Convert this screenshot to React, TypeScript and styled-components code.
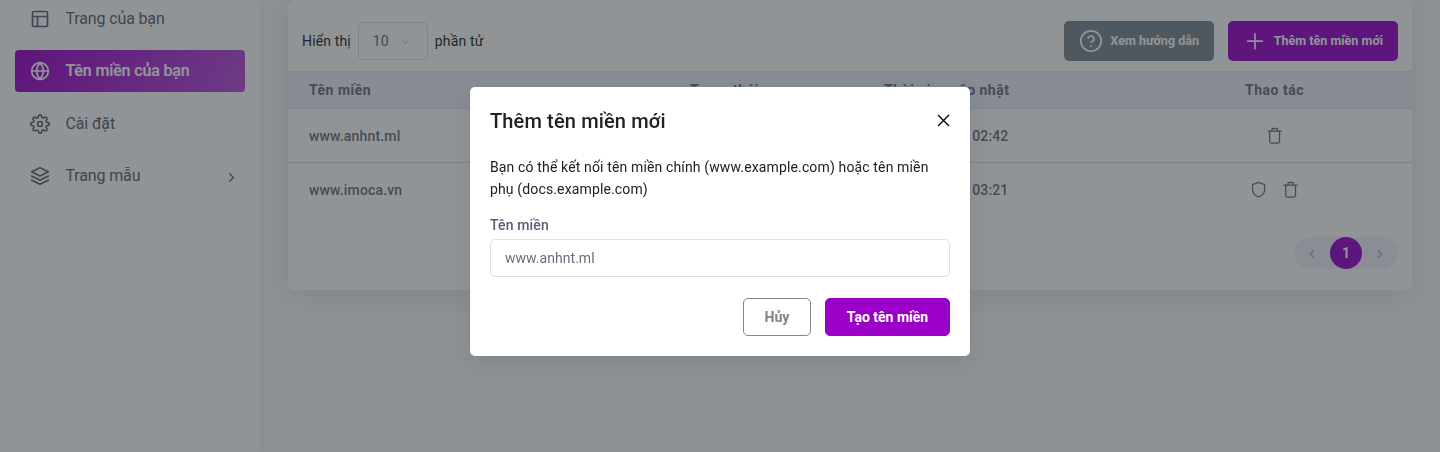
import React from "react";
import styled, { createGlobalStyle, css } from "styled-components";

const GlobalStyle = createGlobalStyle`
  *, *::before, *::after { box-sizing: border-box; }
  html, body { margin: 0; height: 100%; overflow: hidden; }
  body {
    background: #f8f8f8;
    color: #212121;
    font-family: Roboto, "Liberation Sans", sans-serif;
    font-size: 14px;
    line-height: 1.45;
    letter-spacing: 0.14px;
  }
  button, input { font: inherit; letter-spacing: inherit; }
  svg { display: block; flex: none; }
`;

const purple = "#9b00c8";

const Page = styled.div`
  display: flex;
  height: 452px;
  overflow: hidden;
`;

const Sidebar = styled.nav`
  display: flex;
  flex-direction: column;
  gap: 10.5px;
  width: 260px;
  flex: none;
  padding: 0 15px;
  background: #fff;
  box-shadow: 0 0 15px rgba(34, 41, 47, 0.05);
`;

const NavItem = styled.a<{ $active?: boolean; $first?: boolean }>`
  display: flex;
  align-items: center;
  height: 42px;
  margin-top: ${(p) => (p.$first ? "-2.5px" : "0")};
  padding: 0 8px 0 15px;
  border-radius: 4px;
  color: #625f6e;
  font-size: 16px;
  letter-spacing: -0.14px;
  text-decoration: none;
  svg { margin-right: 15.5px; }
  svg + span { flex: 1; padding-top: ${(p) => (p.$active ? 0 : 1)}px; }
  &:last-child svg + span { padding-top: 0; }
  span + svg { margin: 3px -2px 0 0; }
  ${(p) =>
    p.$active &&
    css`
      color: #fff;
      font-weight: 500;
      background: linear-gradient(118deg, ${purple}, rgba(155, 0, 200, 0.7));
      -webkit-text-stroke: 0.2px #fff;
    `}
`;

const Main = styled.main`
  flex: 1;
  padding: 0 28px;
`;

const Card = styled.section`
  height: 290px;
  border-radius: 6px;
  background: #fff;
  box-shadow: 0 4px 24px rgba(34, 41, 47, 0.1);
`;

const Toolbar = styled.div`
  display: flex;
  align-items: center;
  justify-content: space-between;
  height: 71px;
  padding: 11px 14px 0;
`;

const Group = styled.div<{ $gap: number }>`
  display: flex;
  align-items: center;
  gap: ${(p) => p.$gap}px;
`;

const PageSize = styled.div`
  display: flex;
  align-items: center;
  justify-content: space-between;
  width: 70px;
  height: 38px;
  padding: 0 14px;
  border: 1px solid #dcdae6;
  border-radius: 5px;
  color: #6e6b7b;
  svg { color: #d8d6e2; }
`;

const ToolButton = styled.button<{ $color: string; $width: number }>`
  display: flex;
  align-items: center;
  justify-content: space-between;
  width: ${(p) => p.$width}px;
  height: 40px;
  padding: 0 15px;
  border: 0;
  border-radius: 5px;
  background: ${(p) => p.$color};
  color: #fff;
  font-size: 12.55px;
  font-weight: 700;
  letter-spacing: 0;
  white-space: nowrap;
`;

const Row = styled.div<{ $head?: boolean }>`
  display: grid;
  grid-template-columns: 381px 194px 274px 275px;
  align-items: center;
  height: ${(p) => (p.$head ? 38 : 54)}px;
  color: #6e6b7b;
  font-weight: ${(p) => (p.$head ? 700 : 500)};
  letter-spacing: ${(p) => (p.$head ? 0.5 : 0.16)}px;
  border-bottom: 1px solid #d8d8d8;
  ${(p) =>
    p.$head &&
    css`
      background: #efeef8;
      border-top: 1px solid #e4e2ee;
      border-bottom-color: #e4e2ee;
    `}
  &:last-of-type { border-bottom: 0; }
`;

const Cell = styled.div`
  padding: 1px 0 0 21px;
`;

const HeadCell = styled(Cell)`
  padding-top: 0;
`;

const TimeCell = styled(Cell)`
  width: 145.5px;
  text-align: right;
`;

const Actions = styled.div`
  display: flex;
  justify-content: center;
  gap: 16px;
`;

const Footer = styled.footer`
  display: flex;
  justify-content: flex-end;
  padding: 20px 14px 0;
`;

const Pager = styled.div`
  display: flex;
  align-items: center;
  justify-content: space-between;
  width: 104px;
  height: 32px;
  border-radius: 16px;
  background: #f2f1f8;
  color: #a8a5b3;
  svg { margin: 2px 11px 0; }
`;

const PageNumber = styled.span`
  width: 32px;
  height: 32px;
  border-radius: 50%;
  background: ${purple};
  color: #fff;
  font-weight: 700;
  line-height: 32px;
  text-align: center;
`;

const Overlay = styled.div`
  position: fixed;
  inset: 0;
  padding-top: 87px;
  background: rgba(34, 41, 47, 0.5);
`;

const Dialog = styled.div`
  width: 500px;
  height: 269px;
  margin: 0 auto;
  padding: 20px;
  border-radius: 5px;
  background: #fff;
  box-shadow: 0 5px 20px rgba(34, 41, 47, 0.1);
`;

const DialogHead = styled.header`
  display: flex;
  align-items: center;
  justify-content: space-between;
  height: 29px;
  svg { margin-bottom: 2px; }
`;

const Title = styled.h2`
  margin: 0;
  font-size: 20px;
  font-weight: 500;
`;

const Description = styled.p`
  margin: 20px 0 14px;
  line-height: 22px;
`;

const Label = styled.label`
  display: block;
  height: 22px;
  margin-bottom: 3px;
  color: #5e5873;
  font-weight: 500;
  line-height: 22px;
`;

const Input = styled.input`
  display: block;
  width: 100%;
  height: 38px;
  padding: 0 14px;
  border: 1px solid #e0deed;
  border-radius: 5px;
  color: #6e6b7b;
  letter-spacing: 0.04px;
  outline: 0;
`;

const DialogActions = styled.div`
  display: flex;
  justify-content: flex-end;
  gap: 14px;
  margin-top: 21px;
`;

const DialogButton = styled.button<{ $primary?: boolean }>`
  width: ${(p) => (p.$primary ? 125 : 68)}px;
  height: 38px;
  padding: 0;
  border: 1px solid ${(p) => (p.$primary ? purple : "#82868b")};
  border-radius: 5px;
  background: ${(p) => (p.$primary ? purple : "#fff")};
  color: ${(p) => (p.$primary ? "#fff" : "#82868b")};
  font-weight: 700;
  letter-spacing: 0;
`;

type IconProps = { size: number; stroke?: number; children: React.ReactNode };

const Icon = ({ size, stroke = 2, children }: IconProps) => (
  <svg
    width={size}
    height={size}
    viewBox="0 0 24 24"
    fill="none"
    stroke="currentColor"
    strokeWidth={stroke}
    strokeLinecap="round"
    strokeLinejoin="round"
  >
    {children}
  </svg>
);

const LayoutIcon = () => (
  <Icon size={20}>
    <rect x="3" y="3" width="18" height="18" rx="2" />
    <path d="M3 9h18M9 21V9" />
  </Icon>
);

const GlobeIcon = () => (
  <Icon size={20}>
    <circle cx="12" cy="12" r="10" />
    <path d="M2 12h20" />
    <path d="M12 2a15.3 15.3 0 0 1 4 10 15.3 15.3 0 0 1-4 10 15.3 15.3 0 0 1-4-10 15.3 15.3 0 0 1 4-10z" />
  </Icon>
);

const SettingsIcon = () => (
  <Icon size={20}>
    <circle cx="12" cy="12" r="3" />
    <path d="M19.4 15a1.65 1.65 0 0 0 .33 1.82l.06.06a2 2 0 0 1 0 2.83 2 2 0 0 1-2.83 0l-.06-.06a1.65 1.65 0 0 0-1.82-.33 1.65 1.65 0 0 0-1 1.51V21a2 2 0 0 1-2 2 2 2 0 0 1-2-2v-.09A1.65 1.65 0 0 0 9 19.4a1.65 1.65 0 0 0-1.82.33l-.06.06a2 2 0 0 1-2.83 0 2 2 0 0 1 0-2.83l.06-.06a1.65 1.65 0 0 0 .33-1.82 1.65 1.65 0 0 0-1.51-1H3a2 2 0 0 1-2-2 2 2 0 0 1 2-2h.09A1.65 1.65 0 0 0 4.6 9a1.65 1.65 0 0 0-.33-1.82l-.06-.06a2 2 0 0 1 0-2.83 2 2 0 0 1 2.83 0l.06.06a1.65 1.65 0 0 0 1.82.33H9a1.65 1.65 0 0 0 1-1.51V3a2 2 0 0 1 2-2 2 2 0 0 1 2 2v.09a1.65 1.65 0 0 0 1 1.51 1.65 1.65 0 0 0 1.82-.33l.06-.06a2 2 0 0 1 2.83 0 2 2 0 0 1 0 2.83l-.06.06a1.65 1.65 0 0 0-.33 1.82V9a1.65 1.65 0 0 0 1.51 1H21a2 2 0 0 1 2 2 2 2 0 0 1-2 2h-.09a1.65 1.65 0 0 0-1.51 1z" />
  </Icon>
);

const LayersIcon = () => (
  <Icon size={20}>
    <path d="M12 2 2 7l10 5 10-5-10-5z" />
    <path d="m2 17 10 5 10-5M2 12l10 5 10-5" />
  </Icon>
);

const Chevron = ({ d, size, stroke }: { d: string; size: number; stroke?: number }) => (
  <Icon size={size} stroke={stroke}>
    <path d={d} />
  </Icon>
);

const right = "m9 18 6-6-6-6";
const left = "m15 18-6-6 6-6";
const down = "m6 9 6 6 6-6";

const HelpIcon = () => (
  <Icon size={24} stroke={1.8}>
    <circle cx="12" cy="12" r="10.2" />
    <path d="M9.1 9a3 3 0 0 1 5.8 1c0 2-3 3-3 3M12 17h.01" />
  </Icon>
);

const PlusIcon = () => (
  <Icon size={24} stroke={1.7}>
    <path d="M12 4.8v14.8M4.6 12.2h14.8" />
  </Icon>
);

const TrashIcon = () => (
  <svg width="16" height="18" viewBox="0 0 16 18" fill="none" stroke="currentColor" strokeWidth="1.3" strokeLinejoin="round" strokeLinecap="round">
    <path d="M1.2 4.2h13.2M5 4V2.7q0-1.2 1.2-1.2h3.2q1.2 0 1.2 1.2V4M2.7 4.4v10.2q0 1.5 1.5 1.5h6.8q1.5 0 1.5-1.5V4.4" />
  </svg>
);

const ShieldIcon = () => (
  <svg width="16" height="18" viewBox="0 0 16 18" fill="none" stroke="currentColor" strokeWidth="1.3" strokeLinejoin="round">
    <path d="M7.6 1.4 13.6 3.6V9c0 3.3-2.2 5.5-6 7-3.8-1.5-6-3.7-6-7V3.6z" />
  </svg>
);

const CloseIcon = () => (
  <svg width="13" height="13" viewBox="0 0 13 13" fill="none" stroke="#000" strokeWidth="1.3">
    <path d="m1 1 11 11M12 1 1 12" />
  </svg>
);

const domains = [
  { name: "www.anhnt.ml", updated: "02:42", secured: false },
  { name: "www.imoca.vn", updated: "03:21", secured: true },
];

export default function App() {
  return (
    <>
      <GlobalStyle />
      <Page>
        <Sidebar>
          <NavItem $first><LayoutIcon /><span>Trang của bạn</span></NavItem>
          <NavItem $active><GlobeIcon /><span>Tên miền của bạn</span></NavItem>
          <NavItem><SettingsIcon /><span>Cài đặt</span></NavItem>
          <NavItem><LayersIcon /><span>Trang mẫu</span><Chevron d={right} size={15} stroke={1.9} /></NavItem>
        </Sidebar>
        <Main>
          <Card>
            <Toolbar>
              <Group $gap={7}>
                <span>Hiển thị</span>
                <PageSize>10<Chevron d={down} size={15} stroke={1.7} /></PageSize>
                <span>phần tử</span>
              </Group>
              <Group $gap={14}>
                <ToolButton $color="#7e868e" $width={150}><HelpIcon />Xem hướng dẫn</ToolButton>
                <ToolButton $color={purple} $width={170}><PlusIcon />Thêm tên miền mới</ToolButton>
              </Group>
            </Toolbar>
            <Row $head>
              <HeadCell>Tên miền</HeadCell>
              <HeadCell>Trạng thái</HeadCell>
              <HeadCell>Thời gian cập nhật</HeadCell>
              <Actions>Thao tác</Actions>
            </Row>
            {domains.map((d) => (
              <Row key={d.name}>
                <Cell>{d.name}</Cell>
                <Cell />
                <TimeCell>{d.updated}</TimeCell>
                <Actions>{d.secured && <ShieldIcon />}<TrashIcon /></Actions>
              </Row>
            ))}
            <Footer>
              <Pager>
                <Chevron d={left} size={14} />
                <PageNumber>1</PageNumber>
                <Chevron d={right} size={14} />
              </Pager>
            </Footer>
          </Card>
        </Main>
      </Page>
      <Overlay>
        <Dialog role="dialog">
          <DialogHead>
            <Title>Thêm tên miền mới</Title>
            <CloseIcon />
          </DialogHead>
          <Description>
            Bạn có thể kết nối tên miền chính (www.example.com) hoặc tên miền phụ (docs.example.com)
          </Description>
          <Label htmlFor="domain">Tên miền</Label>
          <Input id="domain" defaultValue="www.anhnt.ml" />
          <DialogActions>
            <DialogButton>Hủy</DialogButton>
            <DialogButton $primary>Tạo tên miền</DialogButton>
          </DialogActions>
        </Dialog>
      </Overlay>
    </>
  );
}
